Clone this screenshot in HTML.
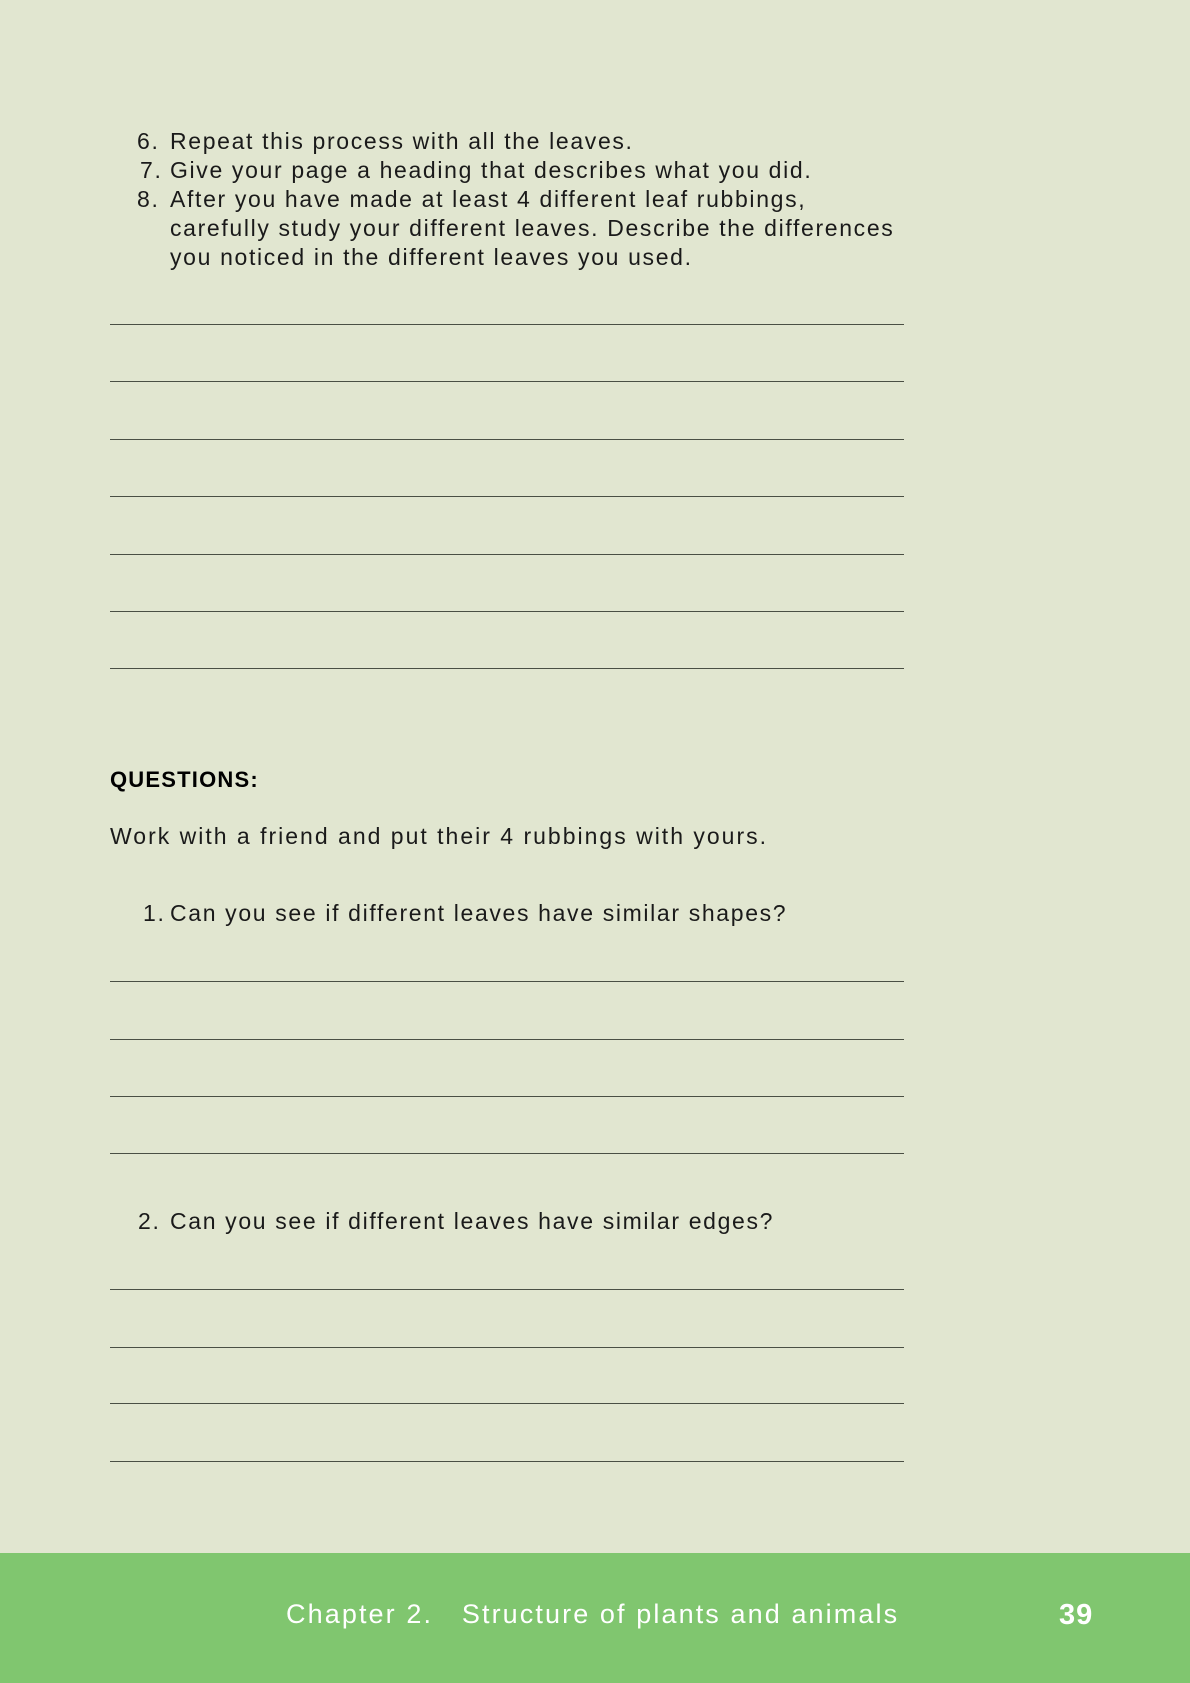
<!DOCTYPE html>
<html><head><meta charset="utf-8"><style>
body{margin:0;width:1190px;height:1683px;background:#e1e6d0;position:relative;overflow:hidden;font-family:"Liberation Sans",sans-serif;color:#1a1a1a}
.t{position:absolute;font-size:23px;line-height:30px;white-space:nowrap;letter-spacing:1.65px}
.r{position:absolute;left:110px;width:794px;height:1px;background:#4a4f44}
.foot{position:absolute;left:0;top:1553px;width:1190px;height:130px;background:#80c66f}
</style></head><body>
<div class="t" style="left:137px;top:126px">6.</div><div class="t" style="left:170px;top:126px">Repeat this process with all the leaves.</div>
<div class="t" style="left:140px;top:155px">7.</div><div class="t" style="left:170px;top:155px">Give your page a heading that describes what you did.</div>
<div class="t" style="left:137px;top:184px">8.</div><div class="t" style="left:170px;top:184px">After you have made at least 4 different leaf rubbings,</div>
<div class="t" style="left:170px;top:213px">carefully study your different leaves. Describe the differences</div>
<div class="t" style="left:170px;top:242px">you noticed in the different leaves you used.</div>
<div class="r" style="top:324px"></div><div class="r" style="top:381px"></div><div class="r" style="top:439px"></div><div class="r" style="top:496px"></div><div class="r" style="top:554px"></div><div class="r" style="top:611px"></div><div class="r" style="top:668px"></div>
<div class="t" style="left:110px;top:765px;font-weight:bold;color:#000;font-size:22px;letter-spacing:1.2px">QUESTIONS:</div>
<div class="t" style="left:110px;top:821px;letter-spacing:2px">Work with a friend and put their 4 rubbings with yours.</div>
<div class="t" style="left:143px;top:898px">1.</div><div class="t" style="left:170px;top:898px">Can you see if different leaves have similar shapes?</div>
<div class="r" style="top:981px"></div><div class="r" style="top:1039px"></div><div class="r" style="top:1096px"></div><div class="r" style="top:1153px"></div>
<div class="t" style="left:138px;top:1206px">2.</div><div class="t" style="left:170px;top:1206px">Can you see if different leaves have similar edges?</div>
<div class="r" style="top:1289px"></div><div class="r" style="top:1347px"></div><div class="r" style="top:1403px"></div><div class="r" style="top:1461px"></div>
<div class="foot"></div>
<div class="t" style="left:286px;top:1598px;font-size:27px;line-height:32px;color:#fff;letter-spacing:2.1px">Chapter 2.&nbsp;&nbsp; Structure of plants and animals</div>
<div class="t" style="left:1059px;top:1599px;font-size:29px;line-height:32px;color:#fff;font-weight:bold;letter-spacing:1px">39</div>
</body></html>
